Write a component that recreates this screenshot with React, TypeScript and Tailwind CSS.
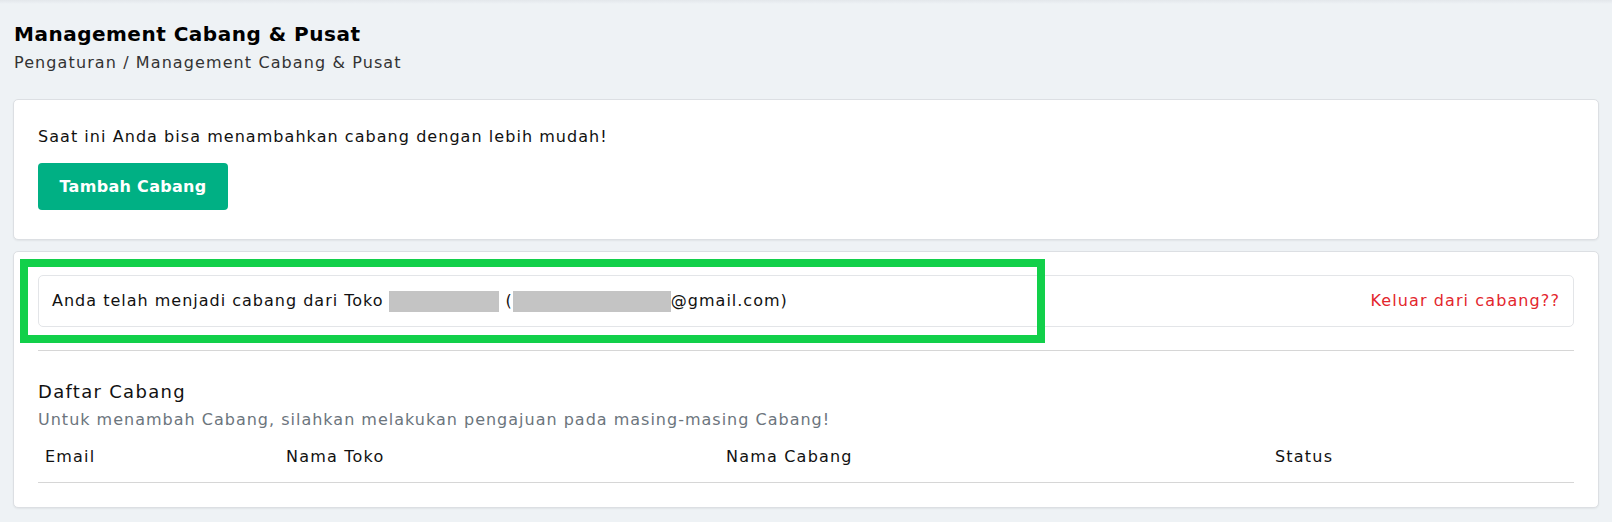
export default function App() {
  return (
    <div className="relative min-h-[522px] bg-[#eef2f5] px-[13px] pt-[21px] pb-4 font-['DejaVu_Sans',sans-serif] text-[#212529]">
      {/* top edge shade */}
      <div className="absolute inset-x-0 top-0 h-[4px] bg-gradient-to-b from-[#e3e7eb] to-[#eef2f5]" />

      {/* Page header */}
      <h1 className="pl-px text-[20px] font-semibold leading-[26px] tracking-[0.5px] text-black">Management Cabang &amp; Pusat</h1>
      <div className="pl-px mt-[4px] text-[16px] leading-[24px] tracking-[1.1px] text-[#333]">Pengaturan / Management Cabang &amp; Pusat</div>

      {/* Add branch card */}
      <div className="mt-[24px] rounded-[5px] border border-[#dcdfe3] bg-white px-6 pt-[24px] pb-[29px] shadow-[0_1px_2px_rgba(0,0,0,0.06)]">
        <p className="text-[16px] leading-[26px] tracking-[1.05px] text-[#111]">Saat ini Anda bisa menambahkan cabang dengan lebih mudah!</p>
        <button className="mt-[13px] h-[47px] w-[190px] rounded-[4px] bg-[#00b084] text-[16px] font-semibold tracking-[0.3px] text-white">
          Tambah Cabang
        </button>
      </div>

      {/* Branch info card */}
      <div className="relative mt-[11px] rounded-[5px] border border-[#dcdfe3] bg-white px-6 pt-[23px] pb-[24px] shadow-[0_1px_2px_rgba(0,0,0,0.06)]">
        <div className="flex h-[52px] items-center justify-between rounded-[5px] border border-[#e3e5e8] px-[13px]">
          <div className="flex items-center text-[16px] tracking-[1px] text-[#111]">
            Anda telah menjadi cabang dari Toko
            <span className="ml-[5px] inline-block h-[21px] w-[110px] bg-[#c4c4c4]" />
            <span className="ml-[7px]">(</span>
            <span className="inline-block h-[21px] w-[158px] bg-[#c4c4c4]" />
            <span>@gmail.com)</span>
          </div>
          <a className="text-[16px] tracking-[1.1px] text-[#e3262d]">Keluar dari cabang??</a>
        </div>

        <hr className="mt-[23px] border-t border-[#d6d6d6]" />

        <h2 className="mt-[29px] text-[18px] leading-[24px] tracking-[1.3px] text-[#111]">Daftar Cabang</h2>
        <p className="mt-[4px] text-[16px] leading-[24px] tracking-[1px] text-[#6c757d]">Untuk menambah Cabang, silahkan melakukan pengajuan pada masing-masing Cabang!</p>

        <table className="w-full border-collapse text-left text-[16px] tracking-[1.2px]">
          <thead>
            <tr className="border-b border-[#d6d6d6]">
              <th className="w-[242px] py-[13px] pl-[7px] pr-[5px] font-normal leading-[24px] text-[#111]">Email</th>
              <th className="w-[440px] py-[13px] pl-[6px] pr-[5px] font-normal leading-[24px] text-[#111]">Nama Toko</th>
              <th className="w-[549px] py-[13px] pl-[6px] pr-[5px] font-normal leading-[24px] text-[#111]">Nama Cabang</th>
              <th className="py-[13px] pl-[6px] pr-[5px] font-normal leading-[24px] text-[#111]">Status</th>
            </tr>
          </thead>
        </table>

        {/* annotation highlight */}
        <div className="pointer-events-none absolute left-[6px] top-[7px] h-[84px] w-[1025px] border-[8px] border-[#12d04a]" />
      </div>
    </div>
  );
}
